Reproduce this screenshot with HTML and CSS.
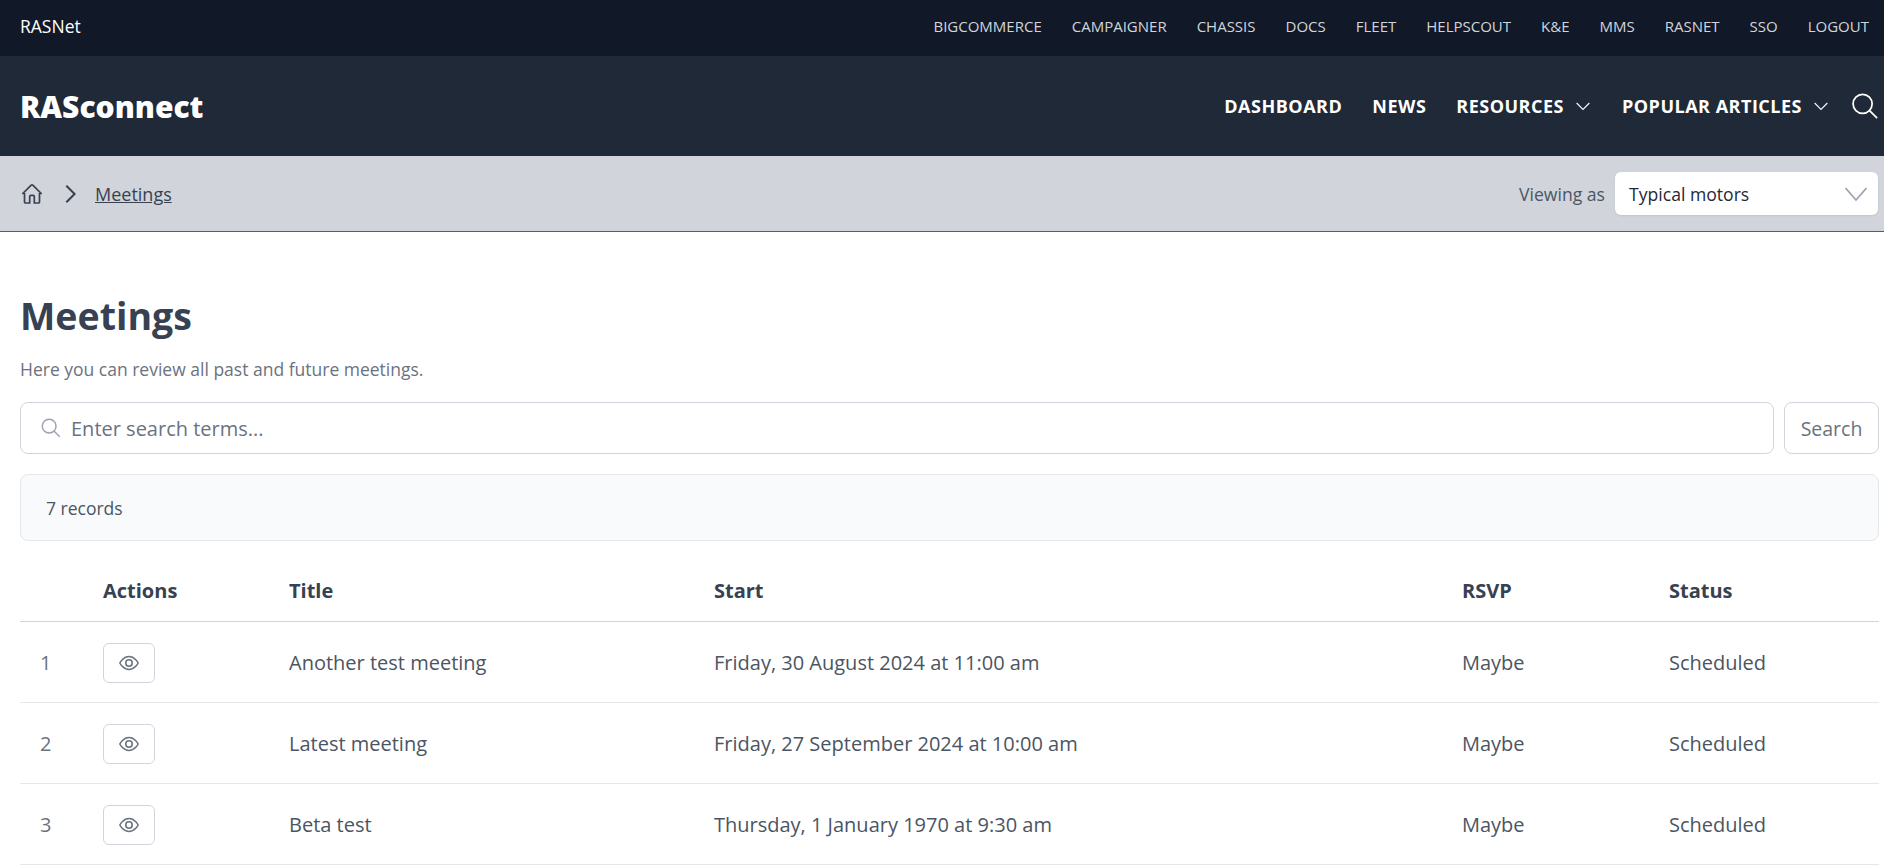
FILE: index.html
```html
<!DOCTYPE html>
<html lang="en">
<head>
<meta charset="utf-8">
<title>Meetings</title>
<link rel="stylesheet" href="styles.css">
</head>
<body>
<div class="topbar">
  <a class="topbar-brand">RASNet</a>
  <nav class="topbar-links">
    <a>BIGCOMMERCE</a><a>CAMPAIGNER</a><a>CHASSIS</a><a>DOCS</a><a>FLEET</a><a>HELPSCOUT</a><a>K&amp;E</a><a>MMS</a><a>RASNET</a><a>SSO</a><a>LOGOUT</a>
  </nav>
</div>
<header class="mainbar">
  <a class="brand">RASconnect</a>
  <nav class="mainnav">
    <a>DASHBOARD</a>
    <a>NEWS</a>
    <a class="has-menu">RESOURCES <svg class="caret" viewBox="0 0 24 24"><path d="M3.500 8 12 16.500 20.500 8"/></svg></a>
    <a class="has-menu">POPULAR ARTICLES <svg class="caret" viewBox="0 0 24 24"><path d="M3.500 8 12 16.500 20.500 8"/></svg></a>
    <svg class="nav-search" viewBox="0 0 24 24"><circle cx="9.800" cy="10" r="8.800"/><path d="m16.200 16.200 7 7"/></svg>
  </nav>
</header>
<div class="crumbs">
  <div class="crumb-path">
    <svg class="home" viewBox="0 0 24 24"><path d="M2.300 12 11.200 3.100a1.100 1.100 0 0 1 1.600 0L21.700 12M4.500 9.800v10.100c0 .6.500 1.100 1.100 1.100h4.100v-6.500c0-.6.500-1.100 1.100-1.100h2.400c.6 0 1.100.5 1.100 1.100V21h4.100c.6 0 1.100-.5 1.100-1.100V9.800"/></svg>
    <svg class="chev" viewBox="0 0 24 24"><path d="m8 3 9 9-9 9"/></svg>
    <a class="crumb-link">Meetings</a>
  </div>
  <div class="viewing">
    <span class="viewing-label">Viewing as</span>
    <div class="select">
      <span>Typical motors</span>
      <svg viewBox="0 0 24 24"><path d="M1.500 6 12 18 22.500 6"/></svg>
    </div>
  </div>
</div>
<main class="content">
  <h1>Meetings</h1>
  <p class="lead">Here you can review all past and future meetings.</p>
  <form class="search">
    <div class="search-input">
      <svg viewBox="0 0 24 24"><circle cx="10" cy="10" r="7.500"/><path d="m15.500 15.500 6 6"/></svg>
      <span>Enter search terms...</span>
    </div>
    <button type="button" class="search-btn">Search</button>
  </form>
  <div class="records">7 records</div>
  <table class="meetings">
    <colgroup>
      <col class="c-num"><col class="c-act"><col class="c-title"><col class="c-start"><col class="c-rsvp"><col class="c-status">
    </colgroup>
    <thead>
      <tr><th></th><th>Actions</th><th>Title</th><th>Start</th><th>RSVP</th><th>Status</th></tr>
    </thead>
    <tbody>
      <tr>
        <td class="num">1</td>
        <td><a class="view"><svg viewBox="0 0 24 24"><path d="M2 12s3.600-7 10-7 10 7 10 7-3.600 7-10 7-10-7-10-7Z"/><circle cx="12" cy="12" r="3.500"/></svg></a></td>
        <td>Another test meeting</td><td>Friday, 30 August 2024 at 11:00 am</td><td>Maybe</td><td>Scheduled</td>
      </tr>
      <tr>
        <td class="num">2</td>
        <td><a class="view"><svg viewBox="0 0 24 24"><path d="M2 12s3.600-7 10-7 10 7 10 7-3.600 7-10 7-10-7-10-7Z"/><circle cx="12" cy="12" r="3.500"/></svg></a></td>
        <td>Latest meeting</td><td>Friday, 27 September 2024 at 10:00 am</td><td>Maybe</td><td>Scheduled</td>
      </tr>
      <tr>
        <td class="num">3</td>
        <td><a class="view"><svg viewBox="0 0 24 24"><path d="M2 12s3.600-7 10-7 10 7 10 7-3.600 7-10 7-10-7-10-7Z"/><circle cx="12" cy="12" r="3.500"/></svg></a></td>
        <td>Beta test</td><td>Thursday, 1 January 1970 at 9:30 am</td><td>Maybe</td><td>Scheduled</td>
      </tr>
    </tbody>
  </table>
</main>
</body>
</html>
```
FILE: styles.css
```css
* { box-sizing: border-box; }
html, body { margin: 0; padding: 0; }
body {
  font-family: "Open Sans", sans-serif;
  color: #374151;
  background: #fff;
  overflow: hidden;
  height: 866px;
}
svg { fill: none; stroke: currentColor; display: block; }

.topbar {
  height: 56px;
  background: #111827;
  display: flex;
  align-items: center;
  justify-content: space-between;
  padding: 0 15px 4px 20px;
}
.topbar-brand { color: #fff; font-size: 17.5px; }
.topbar-links { display: flex; gap: 30px; }
.topbar-links a { color: #d1d5db; font-size: 15px; }

.mainbar {
  height: 100px;
  background: #1f2937;
  display: flex;
  align-items: center;
  justify-content: space-between;
  padding: 0 6px 0 20px;
}
.brand { color: #fff; font-size: 30px; font-weight: 800; }
.mainnav { display: flex; align-items: center; gap: 30px; color: #fff; }
.mainnav a { font-size: 18px; font-weight: 700; letter-spacing: .5px; display: flex; align-items: center; gap: 10px; }
.caret { width: 18px; height: 18px; stroke-width: 1.600; color: #f3f4f6; }
.nav-search { width: 26px; height: 26px; stroke-width: 1.600; margin-left: -8px; }

.crumbs {
  height: 76px;
  background: #d1d5db;
  border-bottom: 1px solid #dc2626;
  display: flex;
  align-items: center;
  justify-content: space-between;
  padding: 0 6px 0 20px;
}
.crumb-path { display: flex; align-items: center; color: #374151; }
.home { width: 24px; height: 24px; stroke-width: 1.700; }
.chev { width: 22px; height: 22px; stroke-width: 2.200; margin: 0 14px 0 15px; color: #374151; }
.crumb-link { font-size: 18px; text-decoration: underline; color: #374151; }
.viewing { display: flex; align-items: center; gap: 10px; }
.viewing-label { font-size: 17.6px; color: #4b5563; }
.select {
  width: 263px;
  height: 43px;
  background: #fff;
  border-radius: 6px;
  box-shadow: 0 1px 2px rgba(0,0,0,.08);
  display: flex;
  align-items: center;
  justify-content: space-between;
  padding: 0 10px 0 14px;
  font-size: 17.6px;
  color: #1f2937;
}
.select svg { width: 24px; height: 24px; stroke-width: 1.800; color: #9ca3af; }

.content { padding: 0 5px 0 20px; }
h1 {
  margin: 0;
  padding-top: 57px;
  font-size: 37.5px;
  line-height: 54px;
  font-weight: 700;
  color: #374151;
}
.lead { margin: 14px 0 0; font-size: 17.5px; line-height: 24px; color: #6b7280; }

.search { display: flex; gap: 10px; margin-top: 21px; height: 52px; }
.search-input {
  flex: 1;
  border: 1px solid #d1d5db;
  border-radius: 8px;
  display: flex;
  align-items: center;
  gap: 9px;
  padding-left: 19px;
  font-size: 20px;
  color: #6b7280;
}
.search-input svg { width: 22px; height: 22px; stroke-width: 1.600; color: #9ca3af; }
.search-btn {
  width: 95px;
  background: #fff;
  border: 1px solid #d1d5db;
  border-radius: 8px;
  font: inherit;
  font-size: 19.5px;
  color: #6b7280;
  padding: 0;
}
.records {
  margin-top: 20px;
  height: 67px;
  background: #f9fafb;
  border: 1px solid #e5e7eb;
  border-radius: 8px;
  display: flex;
  align-items: center;
  padding-left: 25px;
  font-size: 17.5px;
  color: #4b5563;
}

.meetings { width: 100%; margin-top: 0; border-collapse: collapse; table-layout: fixed; }
.c-num { width: 83px; }
.c-act { width: 186px; }
.c-title { width: 425px; }
.c-start { width: 748px; }
.c-rsvp { width: 207px; }
.meetings th {
  height: 80px;
  text-align: left;
  font-size: 20px;
  font-weight: 700;
  color: #374151;
  border-bottom: 1px solid #d1d5db;
  padding: 20px 0 0;
}
.meetings td {
  height: 81px;
  font-size: 20px;
  color: #4b5563;
  border-bottom: 1px solid #e5e7eb;
  padding: 2px 0 0;
}
.meetings td.num { padding-left: 20px; color: #6b7280; }
.view {
  width: 52px;
  height: 40px;
  border: 1px solid #d1d5db;
  border-radius: 6px;
  display: flex;
  align-items: center;
  justify-content: center;
  color: #6b7280;
}
.view svg { width: 22px; height: 22px; stroke-width: 1.700; }
```
